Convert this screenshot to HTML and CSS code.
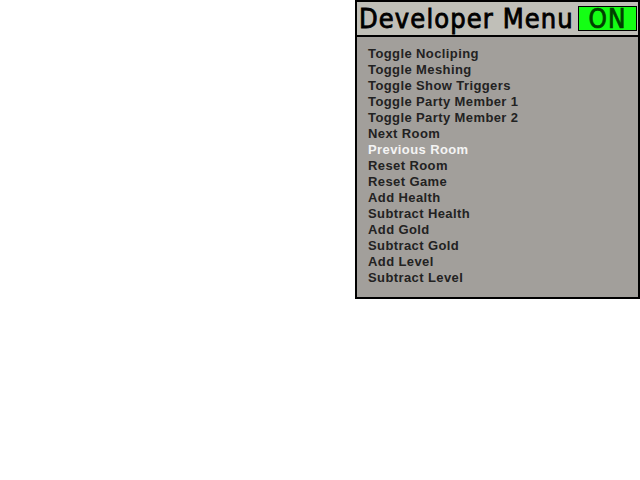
FILE: index.html
```html
<!DOCTYPE html>
<html>
<head>
<meta charset="utf-8">
<link rel="stylesheet" href="styles.css">
</head>
<body>
<div class="page">
  <div class="panel">
    <div class="header">
      <span class="title">Developer Menu</span>
      <span class="badge">ON</span>
    </div>
    <ul class="items">
      <li>Toggle Nocliping</li>
      <li>Toggle Meshing</li>
      <li>Toggle Show Triggers</li>
      <li>Toggle Party Member 1</li>
      <li>Toggle Party Member 2</li>
      <li>Next Room</li>
      <li class="active">Previous Room</li>
      <li>Reset Room</li>
      <li>Reset Game</li>
      <li>Add Health</li>
      <li>Subtract Health</li>
      <li>Add Gold</li>
      <li>Subtract Gold</li>
      <li>Add Level</li>
      <li>Subtract Level</li>
    </ul>
  </div>
</div>
</body>
</html>
```
FILE: styles.css
```css
html, body {
  margin: 0;
  padding: 0;
  background: #ffffff;
}
.page {
  display: flex;
  justify-content: flex-end;
}
.panel {
  width: 281px;
  border: 2px solid #000000;
  background: #a29f9b;
}
.header {
  height: 33px;
  background: #c0bfb8;
  border-bottom: 2px solid #000000;
  display: flex;
  align-items: center;
  padding-left: 2px;
}
.title {
  font-family: "DejaVu Sans Condensed", "DejaVu Sans", sans-serif;
  font-size: 27px;
  color: #000000;
  white-space: nowrap;
  flex-shrink: 0;
  line-height: 1;
  letter-spacing: 1.1px;
  -webkit-text-stroke: 0.8px #000;
}
.badge {
  margin-left: auto;
  margin-right: 1px;
  width: 57px;
  height: 23px;
  background: #14ff14;
  border: 1px solid #000000;
  color: #004000;
  font-family: "DejaVu Sans Condensed", "DejaVu Sans", sans-serif;
  font-size: 26px;
  line-height: 24px;
  text-align: center;
  letter-spacing: 1px;
  -webkit-text-stroke: 0.7px #004000;
}
.items {
  list-style: none;
  margin: 0;
  padding: 9px 0 11px 11px;
}
.items li {
  font-family: "Liberation Sans", Arial, sans-serif;
  font-weight: bold;
  font-size: 13px;
  line-height: 16px;
  height: 16px;
  color: #222222;
  letter-spacing: 0.4px;
  white-space: nowrap;
}
.items li.active {
  color: #f4f4f4;
}
```
